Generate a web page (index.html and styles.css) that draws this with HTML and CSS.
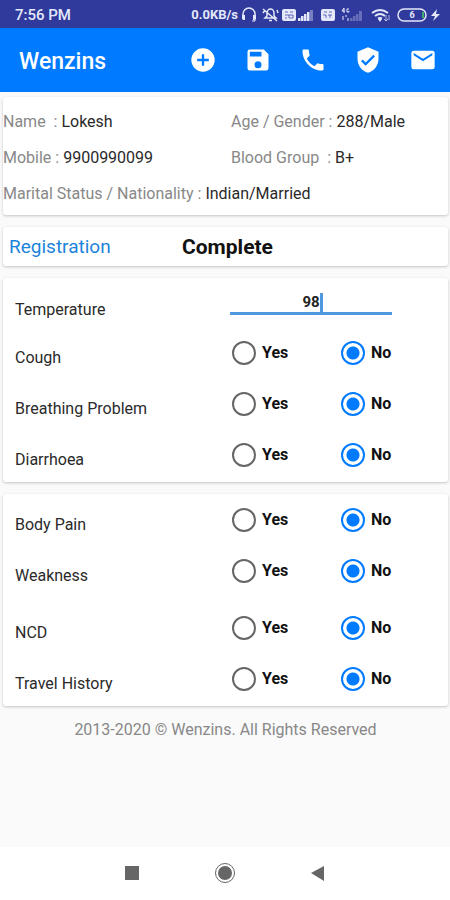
FILE: index.html
```html
<!DOCTYPE html>
<html lang="en">
<head>
<meta charset="utf-8">
<meta name="viewport" content="width=device-width, initial-scale=1">
<title>Wenzins</title>
<link rel="stylesheet" href="styles.css">
</head>
<body>
<div class="status">
  <span class="clock">7:56 PM</span>
  <div class="tray">
    <span class="speed">0.0KB/s</span>
    <svg width="22" height="16" viewBox="-2 0 22 16"><path d="M3 12V7a6 6 0 0 1 12 0v5" fill="none" stroke="currentColor" stroke-width="1.5"/><path d="M2 8h3v5H3.500L2 12zM13 8h3v4l-1.500 1H13z" fill="currentColor"/><path d="M15 12v2h-3" fill="none" stroke="currentColor"/></svg>
    <svg width="20" height="16" viewBox="0 0 20 16"><path d="M5 11h11l-2-2V6a3.500 4 0 0 0-7 0v3zM9 13.500h3M3 2l14 12M3 6l2-3M18 6l-1-3" fill="none" stroke="currentColor" stroke-width="1.500"/></svg>
    <svg width="18" height="16" viewBox="0 0 18 16"><rect x="2" y="2" width="14" height="12" rx="2" fill="currentColor"/><path d="M5 5h3M10 5h3M5 8h8M5 11h2M9 8v3h4V8" stroke="#303a9c" fill="none" opacity=".7"/></svg>
    <svg width="17" height="16" viewBox="0 0 17 16"><path d="M0 14v-3h2.500v3zM3 14V9h2.500v5zM6 14V7h2.500v7zM9 14V5h2.500v9z" fill="currentColor"/><path d="M12 14V3h3v11z" fill="currentColor" opacity=".4"/></svg>
    <svg width="24" height="16" viewBox="0 0 24 16"><rect x="6" y="2" width="14" height="12" rx="2" fill="currentColor"/><path d="M9 5h3M14 5h3M8 8h3v3M13 8h4M15 8v3" stroke="#303a9c" fill="none" opacity=".7"/></svg>
    <svg width="28" height="16" viewBox="-1 0 28 16"><path d="M4 1L2 4h3M4 1v5M9 2H7v3h2V4M3 9v4M6 8v2M8 11v3" fill="none" stroke="currentColor"/><g fill="currentColor" opacity=".3"><path d="M10 14v-3h2.500v3zM13 14V9h2.500v5zM16 14V7h2.500v7zM19 14V4h3v10z"/></g></svg>
    <svg width="29" height="16" viewBox="0 0 29 16"><path d="M5 6q8-6 16 0M8 9q5-4 10 0M11 11.500q2-1 4 0" fill="none" stroke="currentColor" stroke-width="2"/><path d="M11 12h4l-2 3z" fill="currentColor"/><path d="M19 8v6m-2-2l2 2 2-2M22 13V8" fill="none" stroke="currentColor" opacity=".7"/></svg>
    <svg width="46" height="16" viewBox="0 0 46 16"><rect x="2" y="2" width="28" height="12" rx="6" fill="none" stroke="currentColor" stroke-width="1.500"/><path d="M27 5v6" stroke="#3fae6a" stroke-width="2"/><text x="16" y="11" text-anchor="middle" class="charge">6</text><path d="M41 2l-6 7h4l-2 5 7-7h-4z" fill="currentColor"/></svg>
  </div>
</div>
<header class="bar">
  <h1>Wenzins</h1>
  <button type="button" aria-label="Add"><svg viewBox="0 0 24 24"><path d="M12 2a10 10 0 1 0 0 20 10 10 0 0 0 0-20zm5 11h-4v4h-2v-4H7v-2h4V7h2v4h4z"/></svg></button>
  <button type="button" aria-label="Save"><svg viewBox="0 0 24 24"><path d="M17 3H5a2 2 0 0 0-2 2v14a2 2 0 0 0 2 2h14a2 2 0 0 0 2-2V7zm-5 16a3 3 0 1 1 0-6 3 3 0 0 1 0 6zm3-10H5V5h10z"/></svg></button>
  <button type="button" aria-label="Call"><svg viewBox="0 0 24 24"><path d="M6.620 10.790c1.440 2.830 3.760 5.140 6.590 6.590l2.200-2.200c.27-.27.67-.36 1.020-.24 1.120.37 2.330.57 3.570.57.55 0 1 .45 1 1V20c0 .55-.45 1-1 1C10.610 21 3 13.390 3 4c0-.55.45-1 1-1h3.500c.55 0 1 .45 1 1 0 1.250.2 2.450.57 3.570.11.35.03.74-.25 1.020z"/></svg></button>
  <button type="button" aria-label="Verify"><svg viewBox="0 0 24 24"><path d="M12 1L3 5v6c0 5.550 3.840 10.740 9 12 5.160-1.260 9-6.450 9-12V5zm-2 16l-4-4 1.410-1.410L10 14.170l6.590-6.590L18 9z"/></svg></button>
  <button type="button" aria-label="Mail"><svg viewBox="0 0 24 24"><path d="M20 4H4a2 2 0 0 0-2 2v12a2 2 0 0 0 2 2h16a2 2 0 0 0 2-2V6a2 2 0 0 0-2-2zm0 4l-8 5-8-5V6l8 5 8-5z"/></svg></button>
</header>
<main>
  <section class="card patient">
    <p><span class="key">Name &nbsp;:</span> Lokesh</p>
    <p><span class="key">Age / Gender :</span> 288/Male</p>
    <p><span class="key">Mobile :</span> 9900990099</p>
    <p><span class="key">Blood Group &nbsp;:</span> B+</p>
    <p class="wide"><span class="key">Marital Status / Nationality :</span> Indian/Married</p>
  </section>
  <section class="card stage">
    <a href="#registration">Registration</a>
    <strong>Complete</strong>
  </section>
  <section class="card form">
    <div class="row temp">
      <label class="name" for="temp">Temperature</label>
      <div class="field"><input id="temp" type="text" inputmode="numeric" value="98"><span class="caret"></span></div>
    </div>
    <div class="row" role="radiogroup" aria-labelledby="l1"><span class="name" id="l1">Cough</span><label><input type="radio" name="cough">Yes</label><label><input type="radio" name="cough" checked>No</label></div>
    <div class="row" role="radiogroup" aria-labelledby="l2"><span class="name" id="l2">Breathing Problem</span><label><input type="radio" name="breathing">Yes</label><label><input type="radio" name="breathing" checked>No</label></div>
    <div class="row" role="radiogroup" aria-labelledby="l3"><span class="name" id="l3">Diarrhoea</span><label><input type="radio" name="diarrhoea">Yes</label><label><input type="radio" name="diarrhoea" checked>No</label></div>
  </section>
  <section class="card form">
    <div class="row" role="radiogroup" aria-labelledby="l4"><span class="name" id="l4">Body Pain</span><label><input type="radio" name="pain">Yes</label><label><input type="radio" name="pain" checked>No</label></div>
    <div class="row" role="radiogroup" aria-labelledby="l5"><span class="name" id="l5">Weakness</span><label><input type="radio" name="weakness">Yes</label><label><input type="radio" name="weakness" checked>No</label></div>
    <div class="row spaced" role="radiogroup" aria-labelledby="l6"><span class="name" id="l6">NCD</span><label><input type="radio" name="ncd">Yes</label><label><input type="radio" name="ncd" checked>No</label></div>
    <div class="row" role="radiogroup" aria-labelledby="l7"><span class="name" id="l7">Travel History</span><label><input type="radio" name="travel">Yes</label><label><input type="radio" name="travel" checked>No</label></div>
  </section>
  <footer>2013-2020 © Wenzins. All Rights Reserved</footer>
</main>
<nav class="system">
  <button type="button" aria-label="Recent apps"><svg viewBox="0 0 24 24"><path d="M5 5h14v14H5z"/></svg></button>
  <button type="button" aria-label="Home"><svg viewBox="0 0 24 24"><circle cx="12" cy="12" r="7"/><circle cx="12" cy="12" r="9.500" class="ring"/></svg></button>
  <button type="button" aria-label="Back"><svg viewBox="0 0 24 24"><path d="M18 5v15L5 12z"/></svg></button>
</nav>
</body>
</html>
```
FILE: styles.css
```css
* { box-sizing: border-box; }
body {
  margin: 0;
  min-height: 100vh;
  display: flex;
  flex-direction: column;
  background: #fafafa;
  color: #2a2a2a;
  font: 16px/20px Roboto, sans-serif;
}
h1, p { margin: 0; }
button {
  display: flex;
  align-items: center;
  justify-content: center;
  padding: 0;
  border: 0;
  background: none;
  color: inherit;
}
.status {
  display: flex;
  align-items: center;
  justify-content: space-between;
  height: 28px;
  padding: 2px 8px 0 15px;
  background: #303a9c;
  color: #e4e8fa;
  font-weight: 500;
}
.clock { font-size: 15px; }
.tray { display: flex; align-items: center; }
.speed { font-size: 13px; font-weight: 700; }
.charge { font: bold 9px Roboto, sans-serif; fill: currentColor; }
.bar {
  display: flex;
  align-items: center;
  height: 64px;
  padding-left: 19px;
  background: #007bff;
  color: #fff;
}
.bar h1 {
  flex: 1;
  padding-top: 4px;
  font-size: 23px;
  line-height: 28px;
  font-weight: 500;
}
.bar button { width: 55px; height: 56px; }
.bar svg { width: 28px; height: 28px; fill: currentColor; }
main {
  flex: 1;
  display: flex;
  flex-direction: column;
  gap: 12px;
  padding: 5px 2px 0 3px;
}
.card {
  background: #fff;
  border-radius: 3px;
  box-shadow: 0 1px 3px rgba(0, 0, 0, .22);
}
.patient {
  display: grid;
  grid-template-columns: 228fr 217fr;
  row-gap: 16px;
  padding: 15px 0 11px;
}
.wide { grid-column: 1 / -1; }
.key { color: #888; }
.stage {
  display: grid;
  grid-template-columns: 173fr 266fr;
  align-items: center;
  height: 39px;
  padding-left: 6px;
  font-size: 19px;
}
.stage a { color: #1c84dc; text-decoration: none; }
.stage strong { color: #111; font-size: 21px; font-weight: 700; }
.form { padding-bottom: 2px; }
.row {
  display: grid;
  grid-template-columns: 217fr 109fr 107fr;
  align-items: center;
  height: 51px;
  padding-left: 12px;
}
.name { padding-top: 10px; }
.row label:not(.name) {
  display: flex;
  align-items: center;
  gap: 6px;
  font-size: 16px;
  font-weight: 700;
  color: #111;
}
.row input[type="radio"] {
  appearance: none;
  width: 24px;
  height: 24px;
  margin: 0;
  border: 2px solid #666;
  border-radius: 50%;
}
.row input[type="radio"]:checked {
  border-color: #007bff;
  background: radial-gradient(circle, #007bff 6px, #fff 7px);
}
.row.temp {
  grid-template-columns: 215fr 218fr;
  align-items: start;
  height: 49px;
  padding-top: 12px;
}
.field {
  position: relative;
  width: 162px;
}
.field input {
  display: block;
  width: 100%;
  height: 25px;
  padding: 2px 0 0;
  border: 0;
  border-bottom: 3px solid #4f97de;
  outline: 0;
  background: none;
  text-align: center;
  font: 700 15px/20px Roboto, sans-serif;
  color: #222;
}
.caret {
  position: absolute;
  left: calc(50% + 9px);
  top: 3px;
  width: 3px;
  height: 20px;
  background: #4f97de;
}
.row.spaced { height: 57px; padding-top: 6px; }
footer {
  padding-top: 2px;
  text-align: center;
  color: #888;
}
.system {
  display: flex;
  justify-content: center;
  gap: 69px;
  padding: 14px 0 15px;
  background: #fff;
}
.system svg { width: 24px; height: 24px; fill: #666; }
.system .ring { fill: none; stroke: #666; stroke-width: 1; }
```
